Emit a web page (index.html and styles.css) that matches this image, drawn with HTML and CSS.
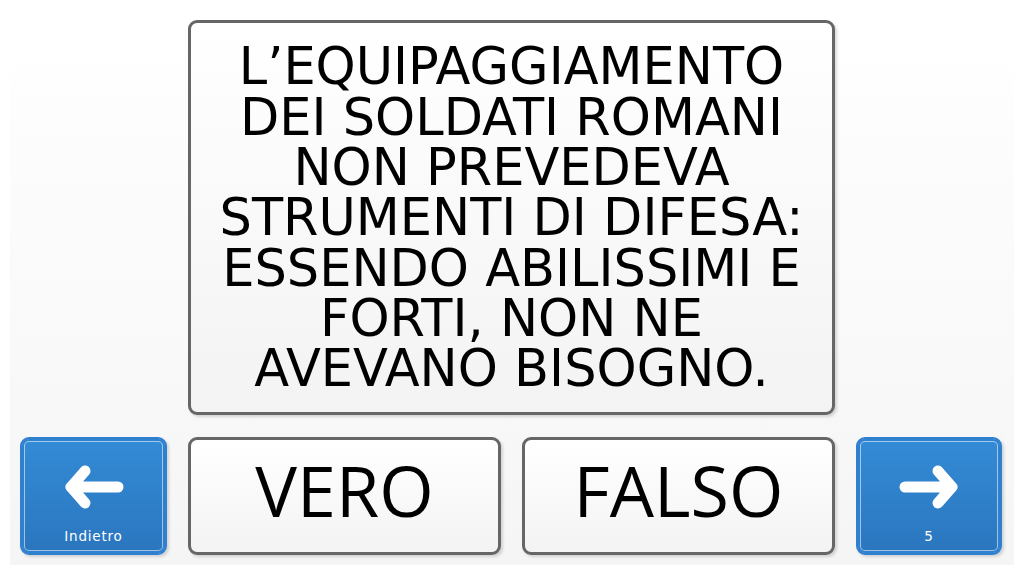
FILE: index.html
```html
<!DOCTYPE html>
<html lang="it">
<head>
    <meta charset="UTF-8">
    <meta name="viewport" content="width=device-width, initial-scale=1.0">
    <title>Vero o falso</title>
    <link rel="stylesheet" href="styles.css">
</head>
<body>
    <div class="stage">
        <div class="board">
            <div class="question">
                <p>L’EQUIPAGGIAMENTO DEI SOLDATI ROMANI NON PREVEDEVA STRUMENTI DI DIFESA: ESSENDO ABILISSIMI E FORTI, NON NE AVEVANO BISOGNO.</p>
            </div>

            <button class="nav-btn">
                <svg class="arrow" width="60" height="46" viewBox="0 0 60 46">
                    <path d="M54 23 H7 M21 7 L7 23 L21 39" fill="none" stroke="#fff" stroke-width="11" stroke-linecap="round" stroke-linejoin="round"/>
                </svg>
                <span class="nav-label">Indietro</span>
            </button>
            <button class="answer">VERO</button>
            <button class="answer">FALSO</button>
            <button class="nav-btn">
                <svg class="arrow" width="60" height="46" viewBox="0 0 60 46">
                    <path d="M6 23 H53 M39 7 L53 23 L39 39" fill="none" stroke="#fff" stroke-width="11" stroke-linecap="round" stroke-linejoin="round"/>
                </svg>
                <span class="nav-label">5</span>
            </button>
        </div>
    </div>
</body>
</html>
```

FILE: styles.css
```css
/* Base */
body {
    margin: 0;
    background: #fff;
    font-family: "DejaVu Sans", Verdana, sans-serif;
    color: #000;
}

.stage {
    margin: 0 10px;
    height: 565px;
    box-sizing: border-box;
    background: linear-gradient(to bottom, #fff 0, #fff 45px, #fdfdfd 120px, #f5f5f5 100%);
}

.board {
    display: grid;
    grid-template-columns: 147px 313px 313px 146px;
    grid-template-rows: 395px 118px;
    column-gap: 21px;
    row-gap: 22px;
    padding: 20px 11px 10px 10px;
}

/* Question card */
.question {
    grid-row: 1;
    grid-column: 2 / 4;
    display: flex;
    align-items: center;
    justify-content: center;
    border: 3px solid #666;
    border-radius: 9px;
    background: linear-gradient(to bottom, #fff, #f3f3f3);
    box-shadow: 2px 2px 3px rgba(0, 0, 0, 0.15);
    padding: 2px 8px 0;
}

.question p {
    margin: 0;
    font-size: 51px;
    line-height: 50.3px;
    text-align: center;
}

/* Answer buttons */
.answer {
    grid-row: 2;
    font-family: "Open Sans", "DejaVu Sans", sans-serif;
    font-size: 70px;
    color: #000;
    border: 3px solid #666;
    border-radius: 9px;
    background: linear-gradient(to bottom, #fff, #f3f3f3);
    box-shadow: 2px 2px 3px rgba(0, 0, 0, 0.15);
    padding: 0 0 12px;
    margin: 0;
}

/* Navigation buttons */
.nav-btn {
    grid-row: 2;
    display: flex;
    flex-direction: column;
    align-items: center;
    justify-content: flex-start;
    margin: 0;
    padding: 0;
    border: 2px solid #2f80cf;
    border-radius: 9px;
    background: linear-gradient(to bottom, #348bd6, #2a76be);
    box-shadow: inset 0 0 0 2px #2f80cf, inset 0 0 0 3px rgba(255, 255, 255, 0.55), 2px 2px 3px rgba(0, 0, 0, 0.15);
    color: #fff;
}

.arrow {
    margin-top: 25px;
}

.nav-label {
    margin-top: 18px;
    font-family: "DejaVu Sans", Verdana, sans-serif;
    font-size: 13.5px;
    letter-spacing: 0.8px;
    color: #fff;
}
```
